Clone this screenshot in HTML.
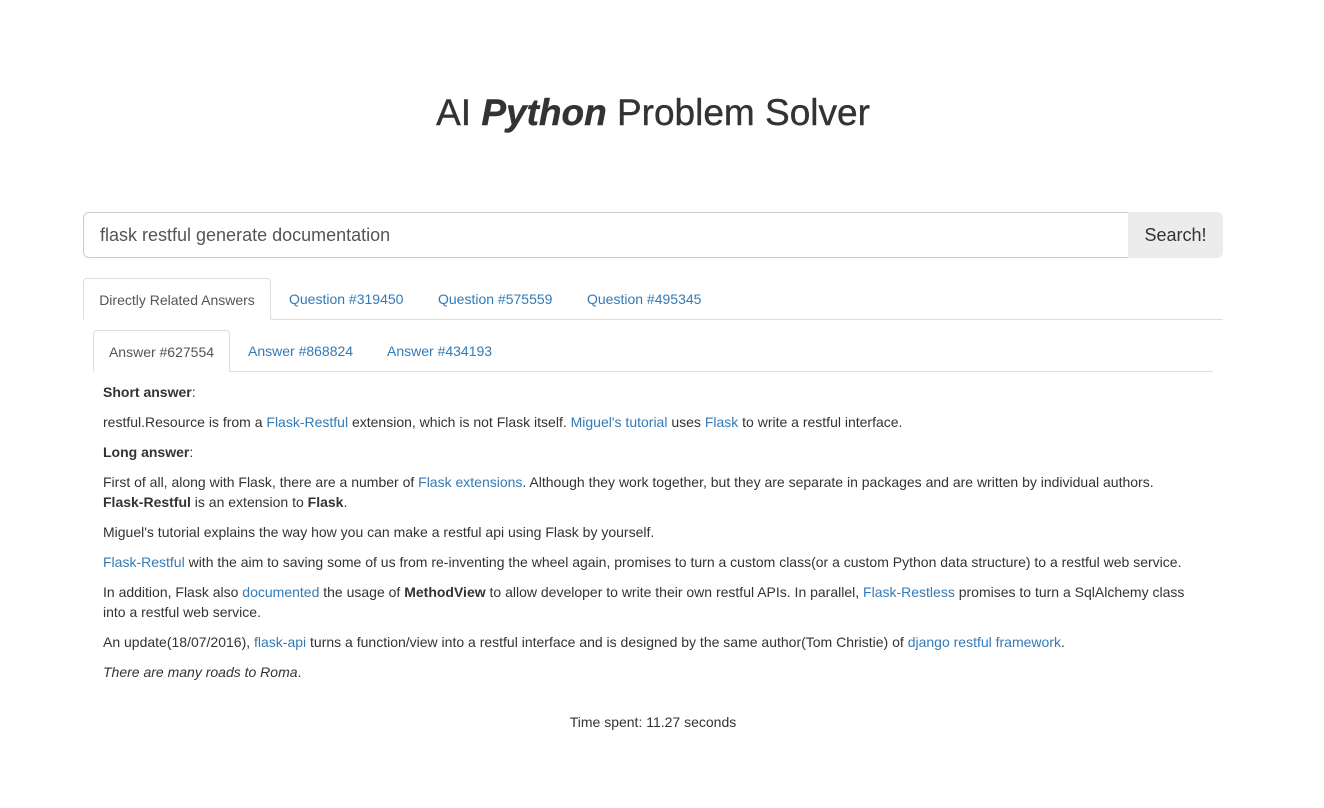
<!DOCTYPE html>
<html><head><meta charset="utf-8"><style>
body{margin:0;background:#fff;font-family:"Liberation Sans",Arial,sans-serif;color:#333;font-size:14px;line-height:20px;width:1324px;height:808px;position:relative;overflow:hidden}
a{color:#337ab7;text-decoration:none}
h1{position:absolute;top:88px;left:0;width:1306px;text-align:center;margin:0;font-size:37px;line-height:50px;font-weight:500;color:#333;-webkit-text-stroke:0.4px #333}
.inp{position:absolute;left:83px;top:212px;border:1px solid #ccc;border-radius:6px 0 0 6px;font-size:18px;line-height:44px;padding-left:16px;box-sizing:border-box;width:1046px;height:46px;color:#555}
.btn{position:absolute;left:1128px;top:212px;width:95px;height:46px;background:#ececec;border-radius:0 6px 6px 0;font-size:18px;line-height:46px;text-align:center;color:#333}
.line{position:absolute;height:1px;background:#ddd}
.tab{position:absolute;height:42px;line-height:42px;font-size:14px}
.act{border:1px solid #ddd;border-bottom:1px solid #fff;border-radius:4px 4px 0 0;background:#fff;text-align:center;color:#555;box-sizing:border-box}
.c{position:absolute;left:103px;top:382px;width:1100px}
.c p{margin:0 0 10px}
.nw{white-space:nowrap}
.ts{position:absolute;top:712px;left:0;width:1306px;text-align:center}
</style></head><body>
<h1>AI <b><i>Python</i></b> Problem Solver</h1>
<div class="inp">flask restful generate documentation</div>
<div class="btn">Search!</div>
<div class="line" style="left:83px;top:319px;width:1140px"></div>
<div class="tab act" style="left:83px;top:278px;width:188px;height:42px">Directly Related Answers</div>
<div class="tab" style="left:289px;top:278px"><a>Question #319450</a></div>
<div class="tab" style="left:438px;top:278px"><a>Question #575559</a></div>
<div class="tab" style="left:587px;top:278px"><a>Question #495345</a></div>
<div class="line" style="left:93px;top:371px;width:1120px"></div>
<div class="tab act" style="left:93px;top:330px;width:137px;height:42px">Answer #627554</div>
<div class="tab" style="left:248px;top:330px"><a>Answer #868824</a></div>
<div class="tab" style="left:387px;top:330px"><a>Answer #434193</a></div>
<div class="c">
<p><b>Short answer</b>:</p>
<p>restful.Resource is from a <a>Flask-Restful</a> extension, which is not Flask itself. <a>Miguel's tutorial</a> uses <a>Flask</a> to write a restful interface.</p>
<p><b>Long answer</b>:</p>
<p>First of all, along with Flask, there are a number of <a>Flask extensions</a>. Although they work together, but they are separate in packages and are written by individual authors. <b class="nw">Flask-Restful</b> is an extension to <b>Flask</b>.</p>
<p>Miguel's tutorial explains the way how you can make a restful api using Flask by yourself.</p>
<p><a>Flask-Restful</a> with the aim to saving some of us from re-inventing the wheel again, promises to turn a custom class(or a custom Python data structure) to a restful web service.</p>
<p>In addition, Flask also <a>documented</a> the usage of <b>MethodView</b> to allow developer to write their own restful APIs. In parallel, <a>Flask-Restless</a> promises to turn a SqlAlchemy class<br>into a restful web service.</p>
<p>An update(18/07/2016), <a>flask-api</a> turns a function/view into a restful interface and is designed by the same author(Tom Christie) of <a>django restful framework</a>.</p>
<p><i>There are many roads to Roma</i>.</p>
</div>
<div class="ts">Time spent: 11.27 seconds</div>
</body></html>
